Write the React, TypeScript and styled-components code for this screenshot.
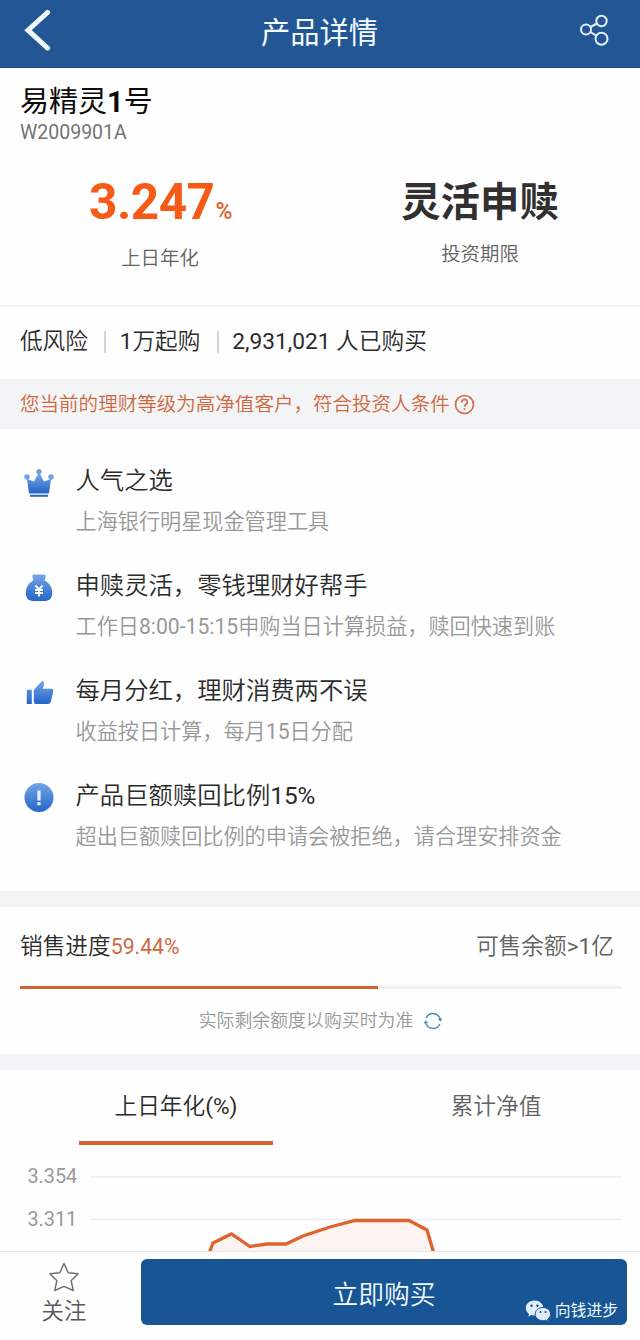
import React from 'react';
import styled, { createGlobalStyle } from 'styled-components';

const GlobalStyle = createGlobalStyle`
  * { box-sizing: border-box; }
  body {
    margin: 0;
    background: #fff;
    font-family: Roboto, "Noto Sans CJK SC", sans-serif;
    color: #2b2b2b;
  }
`;

const Page = styled.div`
  width: 640px;
  height: 1340px;
  display: flex;
  flex-direction: column;
  background: #fefefe;
  overflow: hidden;
`;

const Content = styled.main`
  flex: 1;
  min-height: 0;
  overflow: hidden;
`;

const Text = styled.span<{ $size: number; $line: number; $color?: string; $weight?: number }>`
  display: block;
  white-space: nowrap;
  font-size: ${(p) => p.$size}px;
  line-height: ${(p) => p.$line}px;
  font-weight: ${(p) => p.$weight ?? 350};
  color: ${(p) => p.$color ?? '#2b2b2b'};
`;

const Latin = styled.span`
  font-weight: 400;
`;

const Header = styled.header`
  height: 67.5px;
  flex: none;
  display: flex;
  align-items: flex-start;
  justify-content: space-between;
  padding: 9px 31px 0 24px;
  background: #235694;
  border-bottom: 1px solid #1d4a85;
`;

const HeaderTitle = styled.h1`
  margin: 0 0 0 8px;
  font-size: 29.3px;
  line-height: 48px;
  font-weight: 400;
  color: #f5fbff;
`;

const ProductHead = styled.section`
  height: 90px;
  padding: 17px 20px 0;
`;

const ProductName = styled.h2`
  margin: 0;
  font-size: 29px;
  line-height: 34px;
  font-weight: 400;
  color: #0c0c0c;
  b { font-weight: 700; }
`;

const Stats = styled.section`
  height: 149px;
  display: grid;
  grid-template-columns: 1fr 1fr;
  border-bottom: 2px solid #f2f3f4;
`;

const Stat = styled.div<{ $gap: number }>`
  display: flex;
  flex-direction: column;
  align-items: center;
  gap: ${(p) => p.$gap}px;
  padding-top: 15px;
`;

const Rate = styled.div`
  height: 60px;
  padding-left: 1px;
  font-size: 49.5px;
  line-height: 58px;
  font-weight: 700;
  letter-spacing: -0.5px;
  color: #f55a17;
  small {
    margin-left: 1px;
    font-size: 23px;
    line-height: 1;
    font-weight: 500;
    color: #e0622f;
  }
`;

const Facts = styled.section`
  height: 72.5px;
  display: flex;
  align-items: center;
  padding: 0 20px 1px;
`;

const FactSeparator = styled.i<{ $before: number; $after: number }>`
  width: 2px;
  height: 22px;
  margin: 0 ${(p) => p.$after}px 0 ${(p) => p.$before}px;
  background: #d5d5d5;
`;

const Notice = styled.section`
  height: 50px;
  display: flex;
  align-items: center;
  gap: 4px;
  padding: 1px 20px 0;
  background: #f2f4f6;
`;

const Features = styled.ul`
  height: 462px;
  margin: 0;
  padding: 35px 24px 0;
  list-style: none;
`;

const Feature = styled.li`
  height: 105px;
  display: grid;
  grid-template-columns: 51.5px 1fr;
  svg { margin-top: 4px; }
`;

const FeatureText = styled.div`
  display: flex;
  flex-direction: column;
  gap: 8.5px;
`;

const Gap = styled.div`
  height: 16px;
  background: #f2f4f6;
`;

const Sales = styled.section`
  height: 147px;
  padding: 24px 19px 0 20px;
`;

const SalesRow = styled.div`
  display: flex;
  justify-content: space-between;
  padding-right: 7px;
`;

const Inline = styled.div`
  display: flex;
  align-items: center;
`;

const Track = styled.div`
  height: 3px;
  margin-top: 23px;
  background: #f0f0f1;
`;

const TrackFill = styled.div`
  width: 59.6%;
  height: 3px;
  background: #d0622f;
`;

const SalesNote = styled.div`
  display: flex;
  justify-content: center;
  align-items: center;
  gap: 11px;
  margin-top: 19px;
`;

const Tabs = styled.nav`
  height: 75px;
  display: grid;
  grid-template-columns: 320px 320px;
  padding-left: 16px;
`;

const Tab = styled.button<{ $active?: boolean }>`
  justify-self: center;
  width: 194px;
  height: 75px;
  margin: 0;
  padding: 2px 0 0;
  border: 0;
  border-bottom: 4px solid ${(p) => (p.$active ? '#d8622d' : 'transparent')};
  background: none;
  font-family: inherit;
  font-size: 22.7px;
  line-height: 68px;
  font-weight: 350;
  color: ${(p) => (p.$active ? '#2b2b2b' : '#626262')};
`;

const Chart = styled.svg`
  display: block;
  text {
    font: 400 19.8px Roboto, sans-serif;
    fill: #999;
  }
`;

const Footer = styled.footer`
  flex: none;
  height: 89.5px;
  display: flex;
  padding: 7.5px 13px 0 0;
  border-top: 1.5px solid #e6e8ea;
  background: #fefefe;
`;

const Follow = styled.button`
  width: 128px;
  margin-right: 13px;
  padding: 3px 0 0;
  border: 0;
  background: none;
  font-family: inherit;
  display: flex;
  flex-direction: column;
  align-items: center;
  gap: 3px;
`;

const Buy = styled.button`
  position: relative;
  flex: 1;
  height: 65.5px;
  padding: 2px 0 0;
  border: 0;
  border-radius: 6px;
  background: #175595;
  font-family: inherit;
  font-size: 25.8px;
  font-weight: 350;
  color: #f3fbff;
`;

const Watermark = styled.div`
  position: absolute;
  right: 9px;
  bottom: 1.5px;
  display: flex;
  align-items: center;
  gap: 4px;
`;

const BackIcon = () => (
  <svg width="28" height="44" viewBox="0 0 28 44" fill="none" stroke="#f3faff" strokeWidth="5" strokeLinecap="round">
    <path d="M23.500 3.500 L4 21.200 L23.500 39" />
  </svg>
);

const ShareIcon = () => (
  <svg width="30" height="44" viewBox="0 0 30 44" fill="none" stroke="#e4f1fc" strokeWidth="2">
    <circle cx="7" cy="20.500" r="5" />
    <circle cx="22.500" cy="12" r="5.200" />
    <circle cx="22.500" cy="29.800" r="6" />
    <path d="M11.500 18 L18 14.500 M11.300 23 L17.300 26.700" />
  </svg>
);

const HelpIcon = () => (
  <svg width="21" height="21" viewBox="0 0 21 21" fill="none" stroke="#d56c43" strokeWidth="1.700">
    <circle cx="10.500" cy="10.500" r="9" />
    <path d="M7.700 8.400 C7.700 4.500 13.400 4.600 13.400 8.100 C13.400 10.200 10.500 10.300 10.500 12.800 M10.500 14.200 V16" />
  </svg>
);

const BlueGradient = ({ id }: { id: string }) => (
  <defs>
    <linearGradient id={id} x1="0" y1="0" x2="0" y2="1">
      <stop offset="0" stopColor="#74a5e8" />
      <stop offset="1" stopColor="#2465c7" />
    </linearGradient>
  </defs>
);

const CrownIcon = () => (
  <svg width="30" height="30" viewBox="0 0 30 30">
    <BlueGradient id="crown" />
    <g fill="#739fdd">
      <circle cx="3" cy="9" r="2.700" />
      <circle cx="15" cy="3.600" r="2.700" />
      <circle cx="27" cy="9" r="2.700" />
    </g>
    <path d="M3 11 L10 13.500 L14 6 H16 L20 13.500 L27 11 L25 25.500 H5 Z" fill="url(#crown)" />
    <path d="M6 27.800 H24" stroke="#2465c7" strokeWidth="2" />
  </svg>
);

const BagIcon = () => (
  <svg width="30" height="30" viewBox="0 0 30 30">
    <BlueGradient id="bag" />
    <path d="M10 1.500 H20 Q22.200 1.500 21.500 4 L20.700 7.500 C25 9.500 28.300 14.500 28.300 19.500 C28.300 26 25 28 20 28 H10 C5 28 1.800 26 1.800 19.500 C1.800 14.500 5 9.500 9.300 7.500 L8.500 4 Q7.800 1.500 10 1.500 Z" fill="url(#bag)" />
    <path d="M11.500 12.500 L15 16.500 L18.500 12.500 M11 17 H19 M11 20 H19 M15 16.500 V23.500" fill="none" stroke="#fff" strokeWidth="1.900" />
  </svg>
);

const ThumbIcon = () => (
  <svg width="30" height="30" viewBox="0 0 30 30">
    <BlueGradient id="thumb" />
    <path d="M2.800 11.700 H7.800 V26 H2.800 Z M9.800 12 L17.500 3.400 Q18.700 2.200 19.700 4 Q20.300 5 20 6.500 L18.900 10.700 H27.300 Q29.700 10.700 29.300 13.200 L26.900 23.500 Q26.200 26 23.700 26 H12 Q9.800 26 9.800 24 Z" fill="url(#thumb)" />
  </svg>
);

const AlertIcon = () => (
  <svg width="30" height="30" viewBox="0 0 30 30">
    <BlueGradient id="alert" />
    <circle cx="15" cy="14.500" r="14.500" fill="url(#alert)" />
    <path d="M15 7.500 V17.500 M15 19.300 V22.200" stroke="#eaf5ff" strokeWidth="3.200" />
  </svg>
);

const RefreshIcon = () => (
  <svg width="18" height="18" viewBox="0 0 18 18" fill="none" stroke="#4a90bd" strokeWidth="1.500">
    <path d="M2.200 6 A7.400 7.400 0 0 1 16.300 8 M15.800 12 A7.400 7.400 0 0 1 1.700 10" />
    <path d="M14.600 7 L16.400 8.600 L17.400 6.500 M3.400 11 L1.600 9.400 L0.600 11.500" />
  </svg>
);

const StarIcon = () => (
  <svg width="30" height="30" viewBox="0 0 30 30" fill="none" stroke="#6d6d6d" strokeWidth="1.400" strokeLinejoin="round">
    <path d="M15 1.500 L19.200 10.800 L29.200 11.800 L22.200 18.600 L24.200 28.500 L15 24.400 L5.800 28.500 L7.800 18.600 L0.800 11.800 L10.800 10.800 Z" />
  </svg>
);

const WeChatIcon = () => (
  <svg width="26" height="22" viewBox="0 0 26 22">
    <path d="M9.500 0.500 C4.500 0.500 0.800 3.800 0.800 8 C0.800 10.500 2 12.500 4 13.900 L3.200 16.600 L6.400 15 Q8 15.500 9.500 15.500 C14.500 15.500 18.300 12.200 18.300 8 C18.300 3.800 14.500 0.500 9.500 0.500 Z" fill="#deedfb" />
    <path d="M17.800 7.500 C13.500 7.500 10.200 10.400 10.200 14.100 C10.200 17.800 13.500 20.700 17.800 20.700 Q19.200 20.700 20.600 20.200 L23.300 21.500 L22.700 19.200 C24.500 18 25.600 16.200 25.600 14.100 C25.600 10.400 22.200 7.500 17.800 7.500 Z" fill="#deedfb" stroke="#175595" strokeWidth="1" />
    <g fill="#234f7c">
      <circle cx="6.500" cy="5.800" r="1.200" />
      <circle cx="12.400" cy="5.800" r="1.200" />
      <circle cx="15.500" cy="12" r="1" />
      <circle cx="20.500" cy="12" r="1" />
    </g>
  </svg>
);

const features = [
  { id: 'popular', icon: <CrownIcon />, title: '人气之选', detail: '上海银行明星现金管理工具' },
  {
    id: 'flexible',
    icon: <BagIcon />,
    title: '申赎灵活，零钱理财好帮手',
    detail: <>工作日<Latin>8:00-15:15</Latin>申购当日计算损益，赎回快速到账</>,
  },
  {
    id: 'monthly',
    icon: <ThumbIcon />,
    title: '每月分红，理财消费两不误',
    detail: <>收益按日计算，每月<Latin>15</Latin>日分配</>,
  },
  {
    id: 'limit',
    icon: <AlertIcon />,
    title: <>产品巨额赎回比例<Latin>15%</Latin></>,
    detail: '超出巨额赎回比例的申请会被拒绝，请合理安排资金',
  },
];

export default function App() {
  return (
    <Page>
      <GlobalStyle />
      <Header>
        <BackIcon />
        <HeaderTitle>产品详情</HeaderTitle>
        <ShareIcon />
      </Header>
      <Content>
        <ProductHead>
          <ProductName>易精灵<b>1</b>号</ProductName>
          <Text $size={19.5} $line={27} $color="#747474" $weight={400}>W2009901A</Text>
        </ProductHead>
        <Stats>
          <Stat $gap={11}>
            <Rate>3.247<small>%</small></Rate>
            <Text $size={19.4} $line={30} $color="#626262">上日年化</Text>
          </Stat>
          <Stat $gap={7}>
            <Text $size={39.4} $line={60} $weight={700} $color="#303030">灵活申赎</Text>
            <Text $size={19.4} $line={30} $color="#626262">投资期限</Text>
          </Stat>
        </Stats>
        <Facts>
          <Text $size={22.6} $line={32}>低风险</Text>
          <FactSeparator $before={16} $after={14} />
          <Text $size={22.6} $line={32}><Latin>1</Latin>万起购</Text>
          <FactSeparator $before={17} $after={13} />
          <Text $size={22.7} $line={32}><Latin>2,931,021 </Latin>人已购买</Text>
        </Facts>
        <Notice>
          <Text $size={19.55} $line={30} $color="#cf683f">您当前的理财等级为高净值客户，符合投资人条件</Text>
          <HelpIcon />
        </Notice>
        <Features>
          {features.map((item) => (
            <Feature key={item.id}>
              {item.icon}
              <FeatureText>
                <Text $size={24.35} $line={34}>{item.title}</Text>
                <Text $size={21.15} $line={30} $color="#989898">{item.detail}</Text>
              </FeatureText>
            </Feature>
          ))}
        </Features>
        <Gap />
        <Sales>
          <SalesRow>
            <Inline>
              <Text $size={22.7} $line={32}>销售进度</Text>
              <Text $size={21.2} $line={32} $color="#d0683d" $weight={400}>59.44%</Text>
            </Inline>
            <Text $size={22.7} $line={32} $color="#626262">可售余额<Latin>&gt;1</Latin>亿</Text>
          </SalesRow>
          <Track><TrackFill /></Track>
          <SalesNote>
            <Text $size={17.9} $line={26} $color="#989898">实际剩余额度以购买时为准</Text>
            <RefreshIcon />
          </SalesNote>
        </Sales>
        <Gap />
        <Tabs>
          <Tab $active>上日年化<Latin>(%)</Latin></Tab>
          <Tab>累计净值</Tab>
        </Tabs>
        <Chart width="640" height="180" viewBox="0 1145 640 180">
          <path d="M91 1177 H621 M91 1219.500 H621" stroke="#ececee" strokeWidth="1.500" />
          <text x="27.500" y="1182.500">3.354</text>
          <text x="27.500" y="1225.500">3.311</text>
          <path d="M205 1264 L213 1243 L231.500 1234 L250 1246.500 L267 1244 H286 L303 1236 L330 1227 L355 1220.500 H409 L427 1230 L437 1264 Z" fill="#fdf4f2" />
          <path d="M205 1264 L213 1243 L231.500 1234 L250 1246.500 L267 1244 H286 L303 1236 L330 1227 L355 1220.500 H409 L427 1230 L437 1264" fill="none" stroke="#dd642f" strokeWidth="3.300" />
        </Chart>
      </Content>
      <Footer>
        <Follow>
          <StarIcon />
          <Text $size={22.4} $line={32} $color="#585858">关注</Text>
        </Follow>
        <Buy>
          立即购买
          <Watermark>
            <WeChatIcon />
            <Text $size={15.8} $line={24} $color="#f0f8ff" $weight={400}>向钱进步</Text>
          </Watermark>
        </Buy>
      </Footer>
    </Page>
  );
}
